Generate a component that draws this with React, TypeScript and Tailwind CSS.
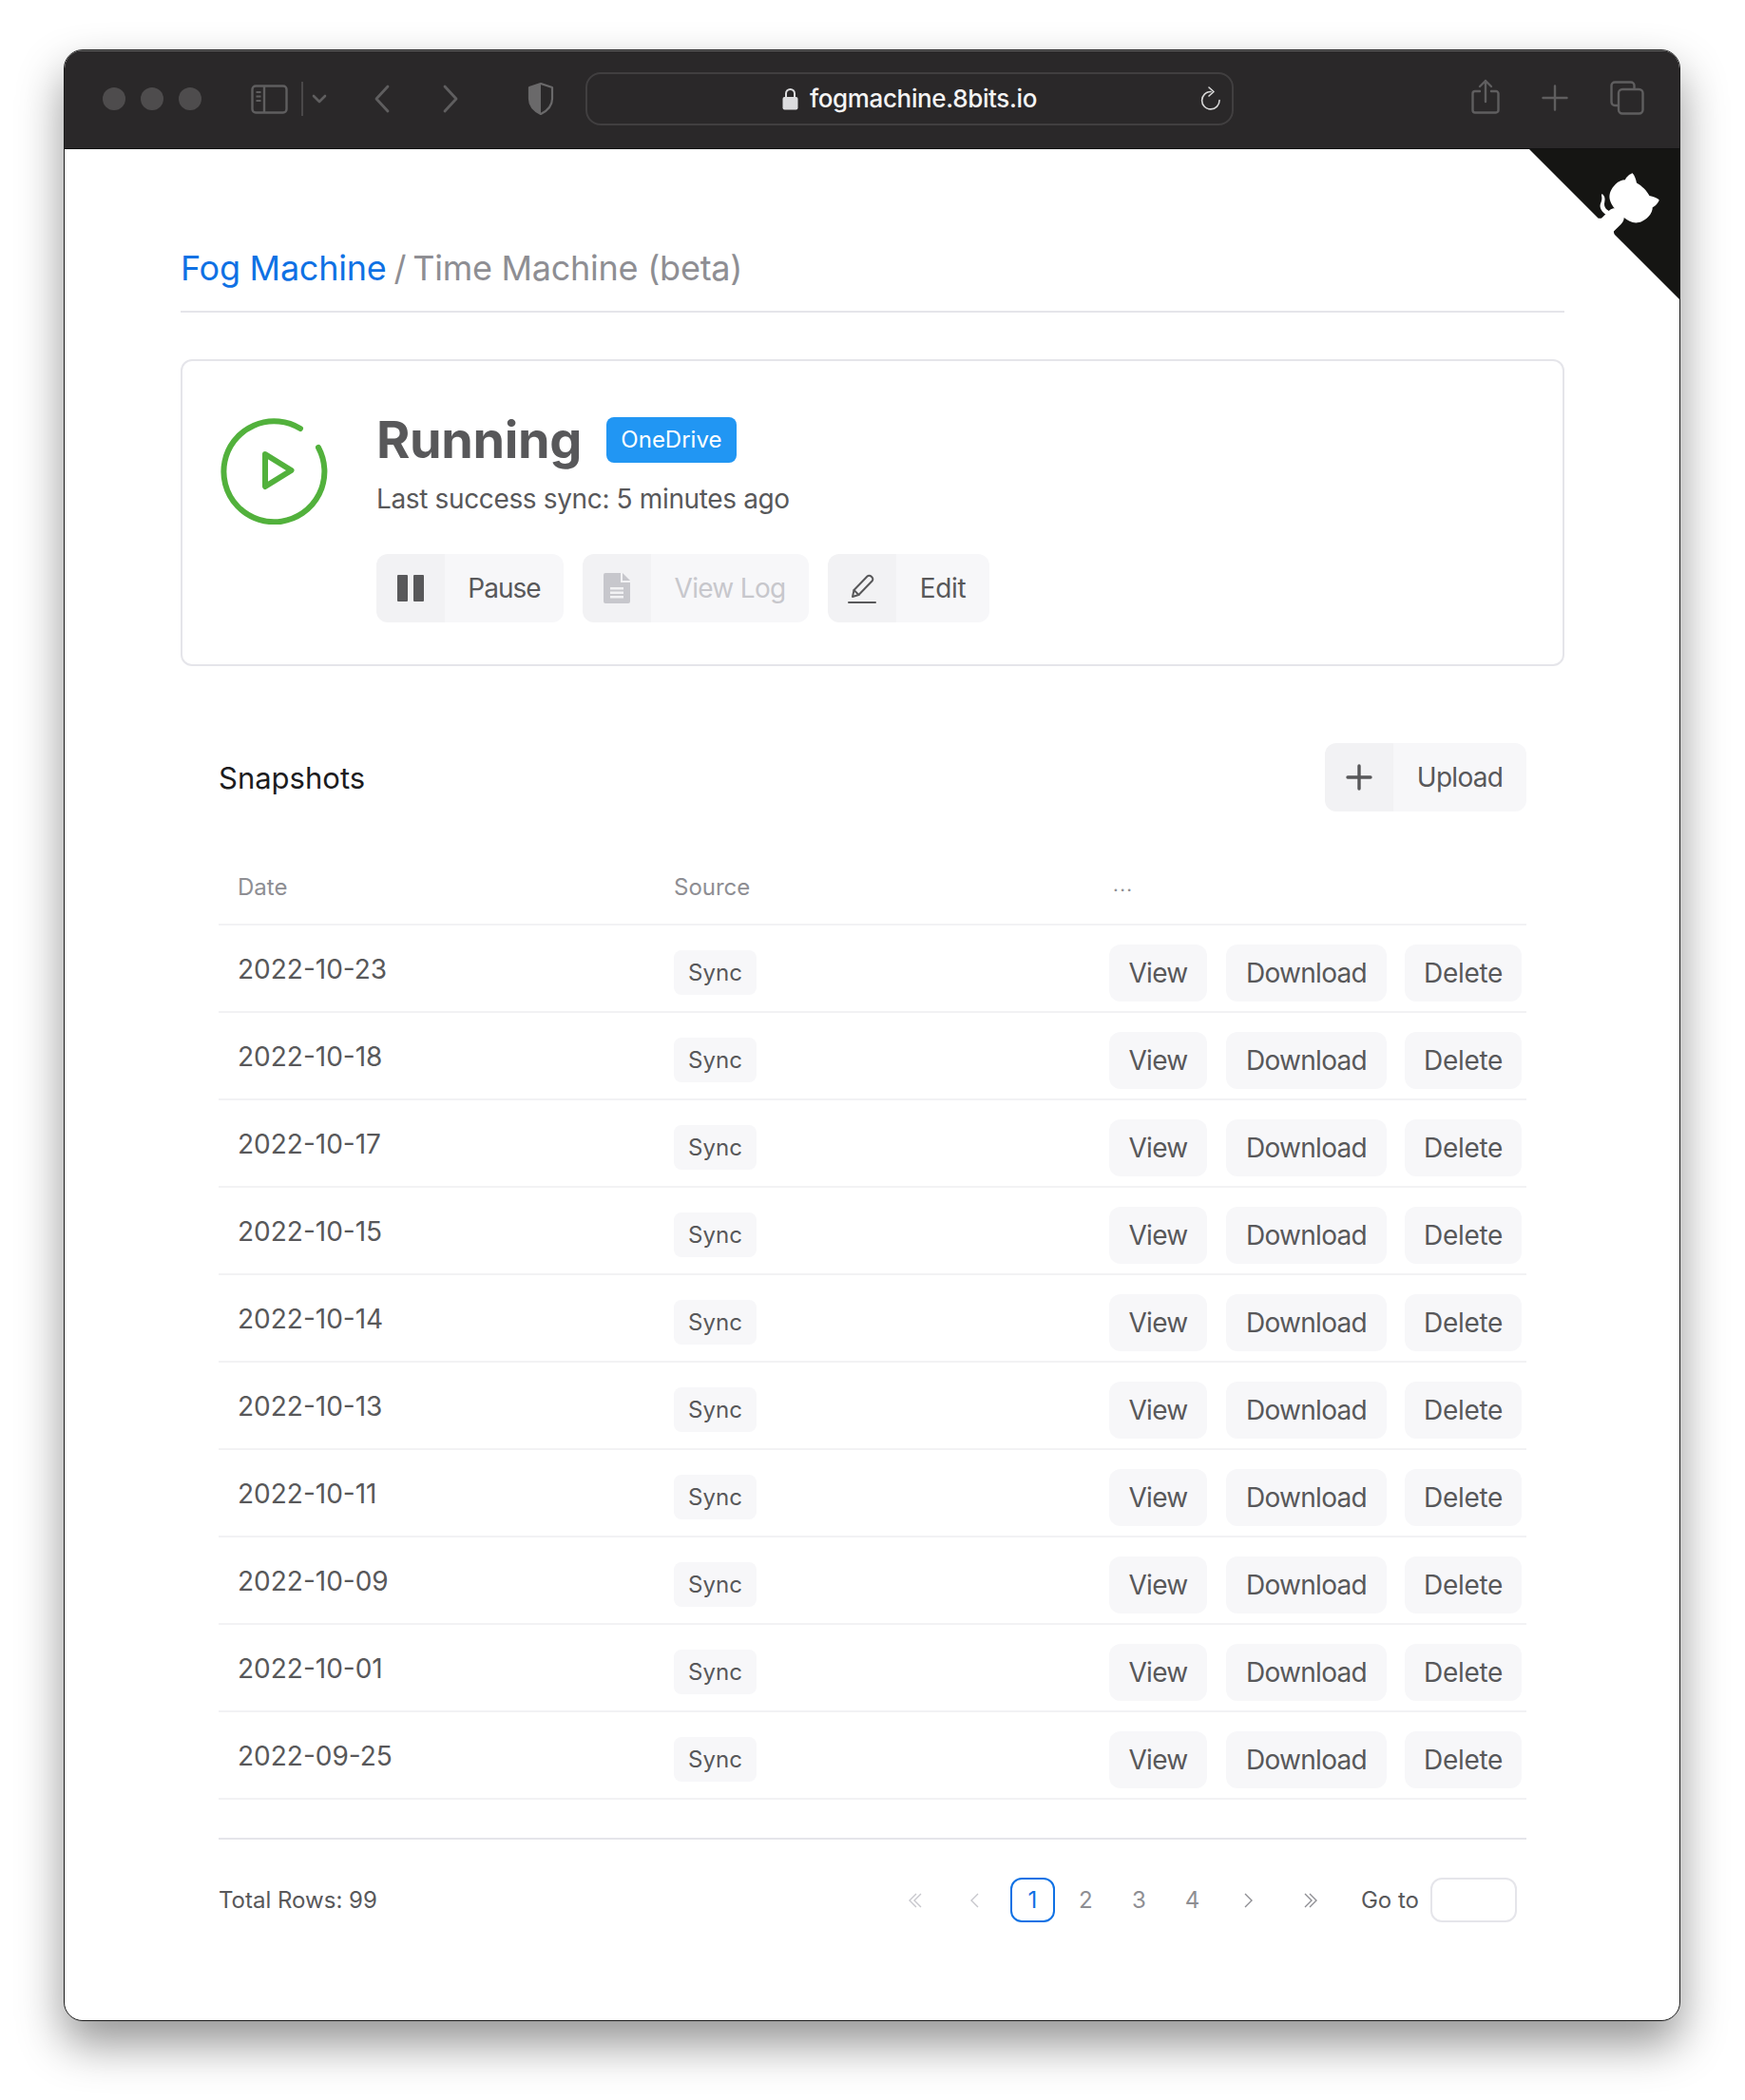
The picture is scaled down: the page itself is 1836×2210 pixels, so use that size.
import React from "react";

const rows = ["2022-10-23","2022-10-18","2022-10-17","2022-10-15","2022-10-14","2022-10-13","2022-10-11","2022-10-09","2022-10-01","2022-09-25"];

function IconButton({ icon, label, muted, className }: { icon: React.ReactNode; label: string; muted?: boolean; className: string }) {
  return (
    <button className={`flex h-[72px] shrink-0 overflow-hidden rounded-xl text-[28px] leading-none ${className}`}>
      <span className="flex h-full w-[72px] shrink-0 items-center justify-center bg-[#f2f2f4]">{icon}</span>
      <span className={`flex h-full flex-1 items-center justify-center bg-[#f7f7f9] ${muted ? "text-[#c7c7cc]" : "text-[#58585a]"}`}>{label}</span>
    </button>
  );
}

function RowButton({ label, className }: { label: string; className: string }) {
  return <button className={`flex h-[60px] shrink-0 items-center justify-center rounded-xl bg-[#f7f7f9] text-[28px] leading-none text-[#58585a] ${className}`}>{label}</button>;
}

function Chevron({ dir, double, dim }: { dir: "l" | "r"; double?: boolean; dim?: boolean }) {
  const a = dir === "l" ? "M9 1 L2 8 L9 15" : "M3 1 L10 8 L3 15";
  const b = dir === "l" ? "M14 1 L7 8 L14 15" : "M8 1 L15 8 L8 15";
  return (
    <span className="flex h-[47px] w-[47px] items-center justify-center">
      <svg width={double ? 17 : 12} height="16" viewBox={double ? "0 0 17 16" : "0 0 12 16"} fill="none" stroke={dim ? "#c7c7cc" : "#8e8e93"} strokeWidth="1.4">
        <path d={a} />
        {double && <path d={b} />}
      </svg>
    </span>
  );
}

function Page({ n }: { n: number }) {
  return <span className="flex h-[47px] w-[47px] items-center justify-center text-[#8e8e93]">{n}</span>;
}

export default function App() {
  return (
    <div className="min-h-[2210px] bg-white pl-[67px] pt-[52px]" style={{ fontFamily: "Inter, 'Noto Sans', sans-serif" }}>
      <div className="relative h-[2075px] w-[1701px] overflow-hidden rounded-[20px] border border-[#1c1c1c] bg-white shadow-[0_24px_48px_0_rgba(0,0,0,0.42)]">
        {/* Title bar */}
        <div className="flex h-[104px] items-center border-b border-[#111] bg-[#2a2829] pb-[1px] pl-[40px] shadow-[inset_0_1px_0_#6a6a6a]">
          <div className="flex gap-4">
            <span className="h-6 w-6 rounded-full bg-[#4e4c4d]" />
            <span className="h-6 w-6 rounded-full bg-[#4e4c4d]" />
            <span className="h-6 w-6 rounded-full bg-[#4e4c4d]" />
          </div>
          <svg className="ml-[52px]" width="39" height="31" viewBox="0 0 39 31" fill="none" stroke="#5f5e5f" strokeWidth="2.4">
            <rect x="1.5" y="1.5" width="36" height="28" rx="3.5" />
            <path d="M14 1.5 V29.5" />
            <path d="M5.5 8 H10.5 M5.5 12.5 H10.5 M5.5 17 H10.5" strokeWidth="1.8" />
          </svg>
          <span className="ml-[14px] h-9 w-0.5 bg-[#4a4849]" />
          <svg className="ml-[9px]" width="16" height="10" viewBox="0 0 16 10" fill="none" stroke="#5f5e5f" strokeWidth="2.6" strokeLinecap="round" strokeLinejoin="round">
            <path d="M2 2 L8 8 L14 2" />
          </svg>
          <svg className="ml-[49px]" width="18" height="30" viewBox="0 0 18 30" fill="none" stroke="#5f5e5f" strokeWidth="2.8" strokeLinecap="round" strokeLinejoin="round">
            <path d="M15 2 L3 15 L15 28" />
          </svg>
          <svg className="ml-[54px]" width="18" height="30" viewBox="0 0 18 30" fill="none" stroke="#5f5e5f" strokeWidth="2.8" strokeLinecap="round" strokeLinejoin="round">
            <path d="M3 2 L15 15 L3 28" />
          </svg>
          <svg className="ml-[72px]" width="28" height="34" viewBox="0 0 28 34">
            <path d="M14 1 L26 5 V17 C26 24 21 29.5 14 33 C7 29.5 2 24 2 17 V5 Z" fill="none" stroke="#6a696a" strokeWidth="2.2" strokeLinejoin="round" />
            <path d="M14 1 V33 C7 29.5 2 24 2 17 V5 Z" fill="#6a696a" />
          </svg>
          <div className="relative ml-[33px] flex h-[56px] w-[682px] items-center justify-center rounded-2xl border-2 border-[#413f40]">
            <svg width="17" height="24" viewBox="0 0 17 24" className="mr-[12px]">
              <path d="M4 11 V6.5 a4.5 4.5 0 0 1 9 0 V11" fill="none" stroke="#dcdcde" strokeWidth="2" />
              <rect x="0.5" y="10" width="16" height="13.5" rx="2" fill="#dcdcde" />
            </svg>
            <span className="text-[26px] font-medium leading-none tracking-[-0.36px] text-[#f4f4f4]">fogmachine.8bits.io</span>
            <svg className="absolute right-[11px] top-[13px]" width="22" height="26" viewBox="0 0 22 26" fill="none" stroke="#d8d8d8" strokeWidth="1.6" strokeLinecap="round" strokeLinejoin="round">
              <path d="M11 5.5 A9.2 9.2 0 1 0 20 14.5" />
              <path d="M9 1 L14 5.5 L9 10" />
            </svg>
          </div>
          <svg className="-mt-[5px] ml-[250px]" width="30" height="37" viewBox="0 0 30 37" fill="none" stroke="#5f5e5f" strokeWidth="2.4" strokeLinecap="round" strokeLinejoin="round">
            <path d="M9 13 H4 a2.5 2.5 0 0 0 -2.5 2.5 V33 a2.5 2.5 0 0 0 2.5 2.5 H26 a2.5 2.5 0 0 0 2.5 -2.5 V15.5 a2.5 2.5 0 0 0 -2.5 -2.5 H21" />
            <path d="M15 24 V2 M9 8 L15 2 L21 8" />
          </svg>
          <svg className="-mt-[3px] ml-[44px]" width="28" height="28" viewBox="0 0 28 28" fill="none" stroke="#5f5e5f" strokeWidth="2.4" strokeLinecap="round">
            <path d="M14 1.5 V26.5 M1.5 14 H26.5" />
          </svg>
          <svg className="-mt-[2px] ml-[44px]" width="36" height="36" viewBox="0 0 36 36" fill="none" stroke="#5f5e5f" strokeWidth="2.4">
            <path d="M8 26 H5 a3.5 3.5 0 0 1 -3.5 -3.5 V5 a3.5 3.5 0 0 1 3.5 -3.5 H22 a3.5 3.5 0 0 1 3.5 3.5 V8" />
            <rect x="9" y="9" width="25.5" height="25.5" rx="4" />
          </svg>
        </div>

        {/* GitHub corner */}
        <svg className="absolute right-0 top-[104px]" width="158" height="158" viewBox="0 0 250 250">
          <path d="M0,0 L115,115 L130,115 L142,142 L250,250 L250,0 Z" fill="#151513" />
          <path d="M128.3,109.0 C113.8,99.7 119.0,89.6 119.0,89.6 C122.0,82.7 120.5,78.6 120.5,78.6 C119.2,72.0 123.4,76.3 123.4,76.3 C127.3,80.9 125.5,87.3 125.5,87.3 C122.9,97.6 130.6,101.9 134.4,103.2" fill="#fff" />
          <path d="M115.0,115.0 C114.9,115.1 118.7,116.5 119.8,115.4 L133.7,101.6 C136.9,99.2 139.9,98.4 142.2,98.6 C133.8,88.0 127.5,74.4 143.8,58.0 C148.5,53.4 154.0,51.2 159.7,51.0 C160.3,49.4 163.2,43.6 171.4,40.1 C171.4,40.1 176.1,42.5 178.8,56.2 C183.1,58.6 187.2,61.8 190.9,65.4 C194.5,69.0 197.7,73.2 200.1,77.6 C213.8,80.2 216.3,84.9 216.3,84.9 C212.7,93.1 206.9,96.0 205.4,96.6 C205.1,102.4 203.0,107.8 198.3,112.5 C181.9,128.9 168.3,122.5 157.7,114.1 C157.9,116.9 156.7,120.9 152.7,124.9 L141.0,136.5 C139.8,137.7 141.6,141.9 141.8,141.8 Z" fill="#fff" />
        </svg>

        {/* Content */}
        <div className="pl-[122px] pr-[121px]">
          <div className="flex h-[172px] items-end border-b-2 border-[#e5e5ea] pb-[21px] text-[36px] leading-[48px] tracking-[-0.25px]">
            <span className="text-[#0f71e4]">Fog Machine</span>
            <span className="ml-2 text-[#8e8e93]">/</span>
            <span className="ml-[7px] text-[#8e8e93]">Time Machine (beta)</span>
          </div>

          <div className="mt-[49px] flex h-[323px] rounded-xl border-2 border-[#e5e5ea] pl-[39px]">
            <svg className="mt-[58px] shrink-0" width="114" height="114" viewBox="0 0 114 114" fill="none" stroke="#52b13c" strokeWidth="6" strokeLinecap="round" strokeLinejoin="round">
              <path d="M104 33 A53 53 0 1 1 85 13" />
              <path d="M48 40 L75.5 57 L48 74 Z" />
            </svg>
            <div className="ml-[51px] flex flex-col">
              <div className="mt-[53px] flex h-[60px] items-center">
                <h1 className="text-[54px] font-bold leading-none tracking-[-0.4px] text-[#58585a]">Running</h1>
                <span className="ml-[26px] flex h-[48px] w-[137px] items-center justify-center rounded-lg bg-[#2196f3] text-[24px] leading-none text-white">OneDrive</span>
              </div>
              <p className="mt-[14px] text-[28px] leading-[36px] tracking-[-0.36px] text-[#58585a]">Last success sync: 5 minutes ago</p>
              <div className="mt-[40px] flex gap-5">
                <IconButton
                  label="Pause"
                  className="w-[197px] tracking-[-1px]"
                  icon={
                    <svg width="28" height="28" viewBox="0 0 28 28" fill="#58585a">
                      <rect x="0" y="0" width="11" height="28" rx="1" />
                      <rect x="17" y="0" width="11" height="28" rx="1" />
                    </svg>
                  }
                />
                <IconButton
                  label="View Log"
                  muted
                  className="w-[238px] tracking-[-0.7px]"
                  icon={
                    <svg width="28" height="32" viewBox="0 0 28 32" fill="#c7c7cc">
                      <path d="M2 0 H18 V10 H28 V30 a2 2 0 0 1 -2 2 H2 a2 2 0 0 1 -2 -2 V2 a2 2 0 0 1 2 -2 Z M20 0 L28 8 H20 Z M7 15 V17.5 H21 V15 Z M7 19.5 V22 H21 V19.5 Z M7 24 V26.5 H21 V24 Z" fillRule="evenodd" />
                    </svg>
                  }
                />
                <IconButton
                  label="Edit"
                  className="w-[170px] tracking-[-0.4px]"
                  icon={
                    <svg width="30" height="32" viewBox="0 0 30 32" fill="none" stroke="#58585a" strokeWidth="2" strokeLinejoin="round" strokeLinecap="round">
                      <path d="M5 25 L6.5 18 L20.5 3.5 a2.8 2.8 0 0 1 4 0 L25.5 4.5 a2.8 2.8 0 0 1 0 4 L11.5 23 Z" />
                      <path d="M6.5 18 L11.5 23" />
                      <path d="M1 31 H29" />
                    </svg>
                  }
                />
              </div>
            </div>
          </div>

          <div className="mx-[40px]">
            <div className="mt-[81px] flex items-center justify-between">
              <h2 className="text-[31px] leading-none text-[#1c1c1e]">Snapshots</h2>
              <IconButton
                label="Upload"
                className="w-[212px] tracking-[-0.7px]"
                icon={
                  <svg width="28" height="28" viewBox="0 0 28 28" fill="none" stroke="#58585a" strokeWidth="3.4" strokeLinecap="round">
                    <path d="M14 2 V26 M2 14 H26" />
                  </svg>
                }
              />
            </div>

            <div className="mt-[40px] flex h-[80px] items-center border-b-2 border-[#f2f2f4] pt-[2px] text-[24px] leading-none text-[#8e8e93]">
              <span className="w-[479px] pl-5">Date</span>
              <span className="w-[460px]">Source</span>
              <span className="-mt-[6px] pl-[2px] text-[20px] tracking-[1.4px]">...</span>
            </div>

            {rows.map((d) => (
              <div key={d} className="flex h-[92px] border-b-2 border-[#f2f2f4]">
                <span className="w-[479px] shrink-0 pl-5 pt-[29px] text-[28px] leading-[34px] text-[#58585a]">{d}</span>
                <span className="mt-[26px] flex h-[47px] w-[87px] shrink-0 items-center justify-center rounded-lg bg-[#f7f7f9] text-[24px] leading-none text-[#58585a]">Sync</span>
                <div className="ml-[371px] mt-[20px] flex">
                  <RowButton label="View" className="w-[103px] tracking-[-0.7px]" />
                  <RowButton label="Download" className="ml-5 w-[169px] tracking-[-0.7px]" />
                  <RowButton label="Delete" className="ml-[19px] w-[123px] tracking-[-0.3px]" />
                </div>
              </div>
            ))}

            <div className="mt-[40px] flex items-center border-t-2 border-[#e5e5ea] pt-[40px] text-[24px] leading-none">
              <span className="text-[#58585a]">Total Rows: 99</span>
              <div className="ml-auto flex items-center pr-[10px]">
                <Chevron dir="l" double dim />
                <span className="ml-4"><Chevron dir="l" dim /></span>
                <span className="ml-[13px] flex h-[47px] w-[47px] items-center justify-center rounded-xl border-2 border-[#0f71e4] text-[#0f71e4]">1</span>
                <span className="ml-[9px]"><Page n={2} /></span>
                <span className="ml-[9px]"><Page n={3} /></span>
                <span className="ml-[9px]"><Page n={4} /></span>
                <span className="ml-3"><Chevron dir="r" /></span>
                <span className="ml-[18px]"><Chevron dir="r" double /></span>
                <span className="ml-[30px] text-[#58585a]">Go to</span>
                <span className="ml-[12px] h-[47px] w-[91px] rounded-xl border-2 border-[#e5e5ea]" />
              </div>
            </div>
          </div>
        </div>
      </div>
    </div>
  );
}
